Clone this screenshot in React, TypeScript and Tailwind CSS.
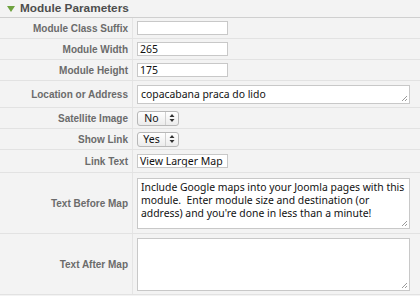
import React from "react";

const labelCls =
  "w-[133px] shrink-0 h-full flex items-center justify-end pr-[4px] text-[10px] font-bold text-[#6b6b6b] border-r border-[#e4e4e4]";

function Row({ label, h, children }: { label: string; h: string; children?: React.ReactNode }) {
  return (
    <div className={`flex items-center border-b border-[#e2e2e2] ${h}`}>
      <div className={labelCls}>{label}</div>
      <div className="flex-1 h-full flex items-center pl-[4px]">{children}</div>
    </div>
  );
}

function TextInput({ value }: { value: string }) {
  return (
    <div className="w-[91px] h-[14px] bg-white border border-[#c8c8c8] flex items-center pl-[2px] text-[10.5px] text-[#111] leading-none font-['Noto_Sans',sans-serif] overflow-hidden whitespace-nowrap">
      {value}
    </div>
  );
}

function Grip() {
  return (
    <svg className="absolute right-[1px] bottom-[1px]" width="8" height="8" viewBox="0 0 8 8">
      <path d="M7 2 L2 7 M7 5 L5 7" stroke="#9a9a9a" strokeWidth="1" />
    </svg>
  );
}

function Area({ h, children }: { h: string; children?: React.ReactNode }) {
  return (
    <div className={`relative w-[273px] ${h} bg-white border border-[#c8c8c8] pl-[3px] pr-[1px] pt-[2px] text-[10.4px] leading-[13px] text-[#111] font-['Noto_Sans',sans-serif]`}>
      {children}
      <Grip />
    </div>
  );
}

function Select({ value }: { value: string }) {
  return (
    <div className="w-[42px] h-[15px] rounded-[3px] border border-[#b8b8b8] bg-gradient-to-b from-white to-[#ececec] flex items-center text-[10.5px] text-[#111] font-['Noto_Sans',sans-serif]">
      <span className="flex-1 text-center leading-none">{value}</span>
      <span className="w-px h-full bg-[#d0d0d0]" />
      <svg width="12" height="10" viewBox="0 0 12 10">
        <path d="M6 1 L8.5 4 H3.5 Z M6 9 L8.5 6 H3.5 Z" fill="#333" />
      </svg>
    </div>
  );
}

export default function App() {
  return (
    <div className="w-[420px] h-[296px] bg-[#f3f3f3] font-['Liberation_Sans',Arial,sans-serif] overflow-hidden">
      <div className="h-[18px] border-b border-[#cfcfcf] flex items-center pl-[7px]">
        <svg width="8" height="7" viewBox="0 0 8 7" className="mr-[5px] mt-[1px]">
          <path d="M0 0 H8 L4 6 Z" fill="#6ea23f" />
        </svg>
        <span className="text-[11.8px] font-bold text-[#4d4d4d]">Module Parameters</span>
      </div>
      <Row label="Module Class Suffix" h="h-[21px]">
        <TextInput value="" />
      </Row>
      <Row label="Module Width" h="h-[21px]">
        <TextInput value="265" />
      </Row>
      <Row label="Module Height" h="h-[21px]">
        <TextInput value="175" />
      </Row>
      <Row label="Location or Address" h="h-[27px]">
        <Area h="h-[19px]">copacabana praca do lido</Area>
      </Row>
      <Row label="Satellite Image" h="h-[21px]">
        <Select value="No" />
      </Row>
      <Row label="Show Link" h="h-[21px]">
        <Select value="Yes" />
      </Row>
      <Row label="Link Text" h="h-[23px]">
        <TextInput value="View Larger Map" />
      </Row>
      <Row label="Text Before Map" h="h-[61px]">
        <Area h="h-[51px]">
          Include Google maps into your Joomla pages with this module.&nbsp; Enter module size and destination (or address) and you're done in less than a minute!
        </Area>
      </Row>
      <Row label="Text After Map" h="h-[61px]">
        <Area h="h-[53px]" />
      </Row>
    </div>
  );
}
